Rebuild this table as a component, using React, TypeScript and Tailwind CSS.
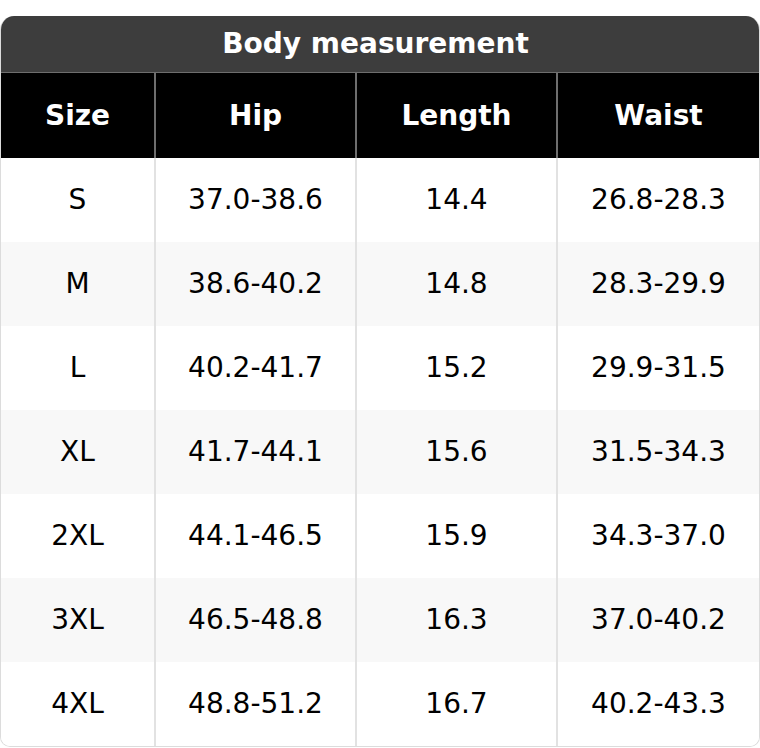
const rows = [
  ["S", "37.0-38.6", "14.4", "26.8-28.3"],
  ["M", "38.6-40.2", "14.8", "28.3-29.9"],
  ["L", "40.2-41.7", "15.2", "29.9-31.5"],
  ["XL", "41.7-44.1", "15.6", "31.5-34.3"],
  ["2XL", "44.1-46.5", "15.9", "34.3-37.0"],
  ["3XL", "46.5-48.8", "16.3", "37.0-40.2"],
  ["4XL", "48.8-51.2", "16.7", "40.2-43.3"],
];

const headers = ["Size", "Hip", "Length", "Waist"];

export default function App() {
  return (
    <div className="bg-white pt-4 font-['DejaVu_Sans',sans-serif]">
      <div className="w-[760px] overflow-hidden rounded-t-[14px] rounded-b-[10px] border-x border-b border-[#dcdcdc]">
        <div className="flex h-[57px] items-center justify-center border-b border-[#6e6e6e] bg-[#3d3d3d] pr-[9px] text-[28px] font-bold text-white">
          Body measurement
        </div>
        <div className="grid h-[85px] grid-cols-[153px_201px_201px_1fr] bg-black text-[28px] font-bold text-white">
          {headers.map((h, i) => (
            <div
              key={h}
              className={`flex items-center justify-center ${i > 0 ? "border-l-2 border-[#6e6e6e]" : ""}`}
            >
              {h}
            </div>
          ))}
        </div>
        {rows.map((row, r) => (
          <div
            key={row[0]}
            className={`grid h-[84px] grid-cols-[153px_201px_201px_1fr] text-[28px] text-black ${r % 2 === 1 ? "bg-[#f8f8f8]" : "bg-white"}`}
          >
            {row.map((cell, i) => (
              <div
                key={i}
                className={`flex items-center justify-center ${i > 0 ? "border-l-2 border-[#e2e2e2]" : ""}`}
              >
                {cell}
              </div>
            ))}
          </div>
        ))}
      </div>
    </div>
  );
}
